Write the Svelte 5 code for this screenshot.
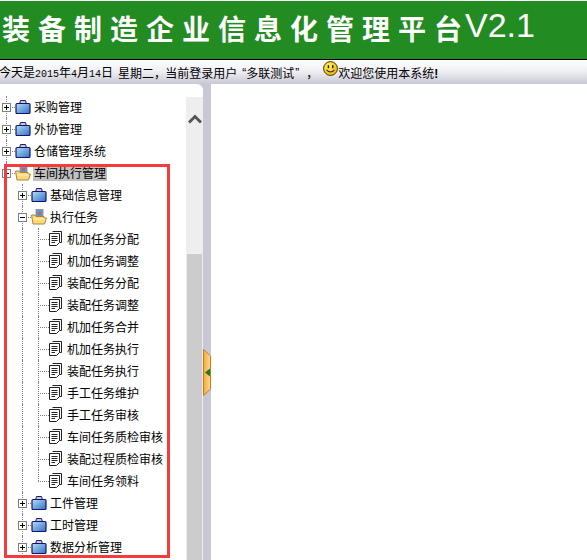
<script>
  const titleChars = ['装', '备', '制', '造', '企', '业', '信', '息', '化', '管', '理', '平', '台'];
  const leaves = ['机加任务分配', '机加任务调整', '装配任务分配', '装配任务调整', '机加任务合并', '机加任务执行', '装配任务执行', '手工任务维护', '手工任务审核', '车间任务质检审核', '装配过程质检审核', '车间任务领料'];
  const rows = [
    { level: 0, kind: 'closed', label: '采购管理' },
    { level: 0, kind: 'closed', label: '外协管理' },
    { level: 0, kind: 'closed', label: '仓储管理系统' },
    { level: 0, kind: 'open', label: '车间执行管理', selected: true },
    { level: 1, kind: 'closed', label: '基础信息管理' },
    { level: 1, kind: 'open', label: '执行任务' },
    ...leaves.map((label, i) => ({ level: 2, kind: 'leaf', label, lastLeaf: i === leaves.length - 1 })),
    { level: 1, kind: 'closed', label: '工件管理' },
    { level: 1, kind: 'closed', label: '工时管理' },
    { level: 1, kind: 'closed', label: '数据分析管理' }
  ];
</script>

<div class="page">
  <header class="banner">
    <div class="title">
      {#each titleChars as c}<span class="tc">{c}</span>{/each}
      <span class="ver">V2.1</span>
    </div>
  </header>

  <div class="status">
    <span class="st st1">今天是<span class="n">2015</span>年<span class="n">4</span>月<span class="n">14</span>日</span>
    <span class="st st2">星期二，</span>
    <span class="st st3">当前登录用户</span>
    <span class="st q q1">“</span>
    <span class="st">多联测试</span>
    <span class="st q q2">”</span>
    <span class="st st5">，</span>
    <svg class="smile" width="15" height="15" viewBox="0 0 16 16" aria-hidden="true">
      <defs>
        <radialGradient id="sm" cx="0.4" cy="0.35" r="0.7"><stop offset="0" stop-color="#fff46a" /><stop offset="1" stop-color="#f0b400" /></radialGradient>
      </defs>
      <circle cx="8" cy="8" r="7.4" fill="url(#sm)" stroke="#3a3000" stroke-width="1" />
      <rect x="5" y="4.5" width="1.6" height="3.2" fill="#222" />
      <rect x="9.6" y="4.5" width="1.6" height="3.2" fill="#222" />
      <path d="M3.8 9.5 Q8 14 12.2 9.5" fill="none" stroke="#222" stroke-width="1.1" />
    </svg>
    <span class="st">欢迎您使用本系统<b class="ex">!</b></span>
  </div>

  <div class="main">
    <aside class="side">
      <div class="tree">
        {#each rows as r}
          <div class="row">
            {#if r.level >= 1}<span class="cell guide"></span>{/if}
            {#if r.level === 2}
              <span class="cell guide"></span>
              <span class="cell guide2" class:last={r.lastLeaf}></span>
            {:else}
              <span class="cell toggle guide">
                <span class="hdash"></span>
                <span class="box">
                  <span class="h"></span>
                  {#if r.kind === 'closed'}<span class="v"></span>{/if}
                </span>
              </span>
            {/if}
            {#if r.kind === 'closed'}
              <svg class="ico" width="16" height="16" viewBox="0 0 16 16" aria-hidden="true">
                <defs>
                  <linearGradient id="blue" x1="0" y1="0" x2="1" y2="1"><stop offset="0" stop-color="#b8dcf8" /><stop offset="1" stop-color="#2f72c4" /></linearGradient>
                </defs>
                <path d="M4.5 5 L5.5 1.5 H10.5 L11.5 5" fill="#c8c8d0" stroke="#1c1c78" stroke-width="1" />
                <rect x="1" y="4.5" width="14" height="10" rx="1" fill="url(#blue)" stroke="#14146e" stroke-width="1.2" />
              </svg>
            {:else if r.kind === 'open'}
              <svg class="ico" width="16" height="16" viewBox="0 0 16 16" aria-hidden="true">
                <rect x="5" y="0.5" width="7" height="8" fill="#5a9ad8" stroke="#8a8a8a" stroke-width="0.8" />
                <rect x="7" y="3" width="3" height="3" fill="#e05848" />
                <path d="M0.5 6 H4 L5 7.5 H13 V9 H15.5 L13.5 15 H2 Z" fill="#fbd97a" stroke="#a8843a" stroke-width="1" />
                <path d="M2.5 10 H14" stroke="#fff2c0" stroke-width="1.2" />
              </svg>
            {:else}
              <svg class="leaf" width="13" height="15" viewBox="0 0 13 15" aria-hidden="true">
                <path d="M3.5 0.5 H12.5 V11.5 H10.5" fill="#fff" stroke="#222" />
                <path d="M0.5 2.5 H10.5 V11.5 L7.5 14.5 H0.5 Z" fill="#fff" stroke="#222" />
                <path d="M2.5 5.5 H8.5 M2.5 7.5 H8.5 M2.5 9.5 H8.5 M2.5 11.5 H6" stroke="#222" />
              </svg>
            {/if}
            <span class="label" class:selected={r.selected}>{r.label}</span>
          </div>
        {/each}
      </div>
      <div class="scroll">
        <div class="up">
          <svg width="14" height="10" viewBox="0 0 14 10" aria-hidden="true"><path d="M1 8.5 L7 2.5 L13 8.5" fill="none" stroke="#555" stroke-width="3" /></svg>
        </div>
        <div class="thumb"></div>
      </div>
    </aside>

    <div class="split">
      <svg class="handle" width="8" height="47" viewBox="0 0 8 47" aria-hidden="true">
        <defs>
          <linearGradient id="or" x1="0" y1="0" x2="1" y2="0"><stop offset="0" stop-color="#f8a838" /><stop offset="1" stop-color="#ffd890" /></linearGradient>
        </defs>
        <path d="M0.5 0.5 L7.5 7 V40 L0.5 46.5 Z" fill="url(#or)" stroke="#c87a20" />
        <path d="M2 23.5 L7 19.5 V27.5 Z" fill="#1f7a1f" />
      </svg>
    </div>

    <div class="content"></div>
    <div class="mark"></div>
  </div>
</div>

<style>
  :global(body) {
    margin: 0;
    background: #fff;
  }
  .page {
    width: 587px;
    height: 560px;
    overflow: hidden;
    display: flex;
    flex-direction: column;
    font-family: "Noto Sans CJK SC", "Liberation Sans", sans-serif;
    font-size: 12px;
    color: #000;
  }
  .banner {
    margin-top: 1px;
    height: 58px;
    flex: none;
    background: #228b22;
    border-bottom: 1px solid #000;
    display: flex;
    align-items: center;
  }
  .title {
    display: flex;
    align-items: center;
    padding-left: 2px;
    padding-bottom: 4px;
    color: #fff;
  }
  .tc {
    width: 36px;
    text-align: left;
    font-size: 28px;
    line-height: 32px;
    font-weight: 700;
    font-family: "Noto Sans CJK SC", sans-serif;
  }
  .ver {
    font-family: "Liberation Sans", sans-serif;
    font-size: 34px;
    line-height: 36px;
    margin-left: -5px;
    margin-top: -6px;
  }
  .status {
    height: 24px;
    flex: none;
    display: flex;
    align-items: center;
    white-space: nowrap;
    background: linear-gradient(#ffffff 0%, #f0f0f4 45%, #c8c8d4 100%);
    line-height: 24px;
    margin-left: -1px;
    padding-top: 2px;
    box-sizing: border-box;
  }
  .n {
    font-family: "Liberation Mono", monospace;
    font-size: 10px;
  }
  .st2 { margin-left: 5px; }
  .st3 { margin-left: -1px; }
  .q {
    font-family: "Liberation Sans", sans-serif;
  }
  .q1 { margin-left: 5px; }
  .q2 { margin-left: 1px; }
  .st5 { margin-left: 7px; margin-right: 5px; }
  .smile {
    margin-top: -9px;
    flex: none;
  }
  .ex { font-weight: 700; font-family: "Liberation Sans", sans-serif; }
  .main {
    flex: 1;
    min-height: 0;
    display: flex;
    position: relative;
    background: #c8c8d4;
  }
  .side {
    width: 203px;
    flex: none;
    display: flex;
    background: #fff;
    border-top-right-radius: 6px;
    overflow: hidden;
  }
  .tree {
    flex: 1;
    min-width: 0;
    padding-top: 12px;
    margin-left: -2px;
  }
  .row {
    height: 22px;
    display: flex;
    align-items: center;
    white-space: nowrap;
  }
  .cell {
    width: 16px;
    height: 22px;
    flex: none;
    position: relative;
  }
  .guide::before,
  .guide2::before {
    content: "";
    position: absolute;
    left: 8px;
    top: 0;
    bottom: 0;
    border-left: 1px dotted #808080;
  }
  .guide2.last::before {
    bottom: 11px;
  }
  .guide2::after,
  .hdash {
    content: "";
    position: absolute;
    left: 8px;
    top: 11px;
    width: 11px;
    border-top: 1px dotted #808080;
  }
  .box {
    position: absolute;
    left: 4px;
    top: 7px;
    width: 7px;
    height: 7px;
    border: 1px solid #808080;
    background: #fff;
  }
  .h {
    position: absolute;
    left: 1px;
    top: 3px;
    width: 5px;
    height: 1px;
    background: #000;
  }
  .v {
    position: absolute;
    left: 3px;
    top: 1px;
    width: 1px;
    height: 5px;
    background: #000;
  }
  .ico {
    flex: none;
    margin-left: 1px;
    margin-top: -1px;
    position: relative;
  }
  .leaf {
    flex: none;
    margin-left: 3px;
    position: relative;
    margin-top: -2px;
  }
  .label {
    margin-left: 2px;
    padding: 0 1px;
    line-height: 16px;
    height: 16px;
  }
  .leaf + .label {
    margin-left: 4px;
  }
  .selected {
    background: #c0c0c0;
  }
  .scroll {
    width: 17px;
    flex: none;
    margin-top: 13px;
    display: flex;
    flex-direction: column;
    background: #eeeeee;
  }
  .up {
    height: 157px;
    flex: none;
    display: flex;
    justify-content: center;
    align-items: flex-start;
    padding-top: 17px;
    box-sizing: border-box;
  }
  .thumb {
    flex: 1;
    margin: 0 1px;
    background: #cccccc;
  }
  .split {
    width: 8px;
    flex: none;
    position: relative;
    background: #c8c8d4;
  }
  .handle {
    position: absolute;
    left: 0;
    top: 265px;
  }
  .content {
    flex: 1;
    background: #fff;
  }
  .mark {
    position: absolute;
    left: 4px;
    top: 80px;
    width: 160px;
    height: 388px;
    border: 3px solid #f53b3b;
    pointer-events: none;
  }
</style>
